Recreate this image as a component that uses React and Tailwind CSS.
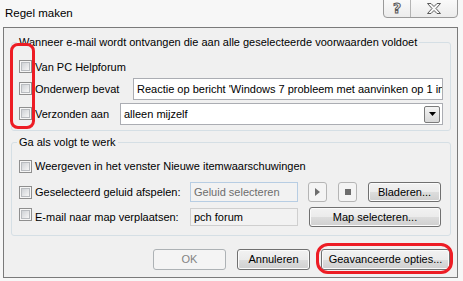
import React from "react";

function Check() {
  return (
    <div className="w-[13px] h-[13px] shrink-0 border border-[#8f8f8f] bg-[#f6f6f6] p-[1px]">
      <div className="w-full h-full border border-[#b9bcc0] bg-linear-to-br from-[#cfd2d6] to-[#f6f6f6]" />
    </div>
  );
}

function Btn({ w, children, className = "" }) {
  return (
    <div
      className={`flex shrink-0 items-center justify-center rounded-[3px] border border-[#707070] bg-[linear-gradient(#f2f2f2_0%,#ebebeb_50%,#dddddd_50%,#cfcfcf_100%)] shadow-[inset_0_0_0_1px_#fbfbfb] text-black ${w} ${className}`}
    >
      {children}
    </div>
  );
}

export default function App() {
  return (
    <div className="relative w-[463px] h-[281px] overflow-hidden bg-[#f7f7f7] font-['Liberation_Sans',Arial,sans-serif] text-[11px] text-black">
      {/* title bar */}
      <div className="flex h-[27px] items-start justify-between">
        <div className="pl-[5px] pt-[6px] text-[11.5px] leading-[14px]">Regel maken</div>
        <div className="mr-[5px] mt-[-3px] flex h-[21px] w-[75px] rounded-b-[4px] border border-[#9a9a9a] bg-linear-to-b from-[#fbfbfb] to-[#ececec]">
          <div className="flex w-[27px] items-center justify-center pt-[2px] border-r border-[#b4b4b4] text-[14px] font-bold text-[#f4f4f4] [-webkit-text-stroke:1px_#5a5a5a] font-['DejaVu_Sans',sans-serif]">
            ?
          </div>
          <div className="flex flex-1 items-center justify-center pt-[2px]">
            <svg width="14" height="11" viewBox="0 0 14 11">
              <polygon
                points="0.5,0.5 4,0.5 7,3.5 10,0.5 13.5,0.5 9,5.5 13.5,10.5 10,10.5 7,7.5 4,10.5 0.5,10.5 5,5.5"
                fill="#f8f8f8"
                stroke="#5a5a5a"
                strokeWidth="1"
              />
            </svg>
          </div>
        </div>
      </div>

      {/* client frame */}
      <div className="ml-[3px] w-[455px] h-[251px] border border-[#7a7a7a] bg-[#f0f0f0]">
        <fieldset className="ml-[7px] mt-[8px] w-[440px] rounded-[3px] border border-[#d5dfe5] pl-[5px] pt-[8px] pb-[5px]">
          <legend className="px-[2px] leading-[12px]">
            Wanneer e-mail wordt ontvangen die aan alle geselecteerde voorwaarden voldoet
          </legend>
          <div className="flex h-[22px] items-start pl-[2px]">
            <div className="mt-[4px]"><Check /></div>
            <div className="ml-[3px] leading-[22px]">Van PC Helpforum</div>
          </div>
          <div className="flex h-[22px] items-start pl-[2px]">
            <div className="mt-[4px]"><Check /></div>
            <div className="ml-[3px] w-[98px] leading-[22px]">Onderwerp bevat</div>
            <div className="h-[22px] w-[310px] overflow-hidden whitespace-nowrap border border-[#abadb3] bg-white pl-[3px] leading-[20px]">
              Reactie op bericht 'Windows 7 probleem met aanvinken op 1 internetverbinding'
            </div>
          </div>
          <div className="mt-[3px] flex h-[22px] items-start pl-[2px]">
            <div className="mt-[4px]"><Check /></div>
            <div className="ml-[3px] w-[85px] leading-[22px]">Verzonden aan</div>
            <div className="flex h-[22px] w-[323px] items-center justify-between border border-[#abadb3] bg-white pl-[3px] pr-[2px]">
              <span className="leading-[20px]">alleen mijzelf</span>
              <div className="flex h-[17px] w-[16px] items-center justify-center rounded-[2px] border border-[#7b7b7b] bg-linear-to-b from-[#f4f4f4] to-[#d8d8d8]">
                <svg width="7" height="4" viewBox="0 0 7 4">
                  <polygon points="0,0 7,0 3.5,4" fill="#000" />
                </svg>
              </div>
            </div>
          </div>
        </fieldset>

        <fieldset className="ml-[7px] mt-[5px] w-[440px] rounded-[3px] border border-[#d5dfe5] pl-[5px] pt-[8px] pb-[8px]">
          <legend className="px-[2px] leading-[12px]">Ga als volgt te werk</legend>
          <div className="flex h-[20px] items-start pl-[2px]">
            <div className="mt-[4px]"><Check /></div>
            <div className="ml-[3px] leading-[20px]">Weergeven in het venster Nieuwe itemwaarschuwingen</div>
          </div>
          <div className="mt-[6px] flex h-[20px] items-start pl-[2px]">
            <div className="mt-[4px]"><Check /></div>
            <div className="ml-[3px] w-[155px] leading-[20px]">Geselecteerd geluid afspelen:</div>
            <div className="h-[20px] w-[108px] border border-[#b7cde3] bg-[#f2f2f2] pl-[3px] leading-[18px] text-[#6d6d6d]">
              Geluid selecteren
            </div>
            <div className="ml-[10px] flex h-[20px] w-[19px] items-center justify-center rounded-[3px] border border-[#b5b5b5] bg-[#f4f4f4]">
              <svg width="5" height="8" viewBox="0 0 5 8">
                <polygon points="0,0 5,4 0,8" fill="#6d6d6d" />
              </svg>
            </div>
            <div className="ml-[11px] flex h-[20px] w-[19px] items-center justify-center rounded-[3px] border border-[#b5b5b5] bg-[#f4f4f4]">
              <div className="h-[6px] w-[6px] bg-[#6d6d6d]" />
            </div>
            <Btn w="w-[73px] h-[20px] ml-[11px]">Bladeren...</Btn>
          </div>
          <div className="mt-[5px] flex h-[20px] items-start pl-[2px]">
            <div className="mt-[1px]"><Check /></div>
            <div className="ml-[3px] mt-[1px] w-[155px] leading-[18px]">E-mail naar map verplaatsen:</div>
            <div className="mt-[1px] h-[18px] w-[108px] border border-[#cfcfcf] bg-[#f2f2f2] pl-[3px] leading-[16px]">
              pch forum
            </div>
            <Btn w="w-[132px] h-[20px] ml-[11px]">Map selecteren...</Btn>
          </div>
        </fieldset>

        <div className="mt-[13px] flex justify-end gap-[11px] pr-[7px]">
          <div className="flex h-[21px] w-[73px] items-center justify-center rounded-[3px] border border-[#adb2b5] bg-[#f4f4f4] text-[#838383]">
            OK
          </div>
          <Btn w="w-[73px] h-[21px]">Annuleren</Btn>
          <Btn w="w-[129px] h-[21px]">Geavanceerde opties...</Btn>
        </div>
      </div>

      {/* red annotations */}
      <div className="absolute left-[10px] top-[43px] h-[86px] w-[25px] rounded-[8px] border-[3px] border-[#ed1c24]" />
      <div className="absolute left-[316px] top-[243px] h-[31px] w-[137px] rounded-[12px] border-[3px] border-[#ed1c24]" />
    </div>
  );
}
